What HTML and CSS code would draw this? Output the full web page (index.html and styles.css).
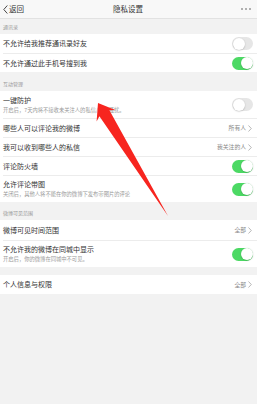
FILE: index.html
```html
<!DOCTYPE html>
<html lang="zh-CN">
<head>
<meta charset="utf-8">
<link rel="stylesheet" href="styles.css">
</head>
<body>
<div class="page">
  <header class="nav">
    <div class="back">
      <svg class="back-icon" width="5" height="9" viewBox="0 0 5 9"><path d="M4.3 0.5 L0.8 4.5 L4.3 8.5" fill="none" stroke="#333" stroke-width="0.9"/></svg>
      <span>返回</span>
    </div>
    <div class="title">隐私设置</div>
    <svg class="more" width="12" height="4" viewBox="0 0 12 4"><circle cx="2" cy="2" r="0.8" fill="#555"/><circle cx="6" cy="2" r="0.8" fill="#555"/><circle cx="10" cy="2" r="0.8" fill="#555"/></svg>
  </header>

  <div class="sec-head h15">通讯录</div>
  <div class="group">
    <div class="row"><div class="cell h19"><span class="label">不允许给我推荐通讯录好友</span><span class="switch"></span></div></div>
    <div class="row"><div class="cell h18"><span class="label">不允许通过此手机号搜到我</span><span class="switch on"></span></div></div>
  </div>

  <div class="sec-head h19">互动管理</div>
  <div class="group">
    <div class="row"><div class="cell h27"><div class="texts"><span class="label">一键防护</span><span class="sub">开启后，7天内将不接收未关注人的私信/评论骚扰。</span></div><span class="switch"></span></div></div>
    <div class="row"><div class="cell h18"><span class="label">哪些人可以评论我的微博</span><span class="value">所有人<svg class="chev" width="4" height="7" viewBox="0 0 4 7"><path d="M0.5 0.5 L3.3 3.5 L0.5 6.5" fill="none" stroke="#999" stroke-width="0.7"/></svg></span></div></div>
    <div class="row"><div class="cell h18"><span class="label">我可以收到哪些人的私信</span><span class="value">我关注的人<svg class="chev" width="4" height="7" viewBox="0 0 4 7"><path d="M0.5 0.5 L3.3 3.5 L0.5 6.5" fill="none" stroke="#999" stroke-width="0.7"/></svg></span></div></div>
    <div class="row"><div class="cell h18"><span class="label">评论防火墙</span><span class="switch on"></span></div></div>
    <div class="row"><div class="cell h26"><div class="texts"><span class="label">允许评论带图</span><span class="sub">关闭后，其他人将不能在你的微博下发布带图片的评论</span></div><span class="switch on"></span></div></div>
  </div>

  <div class="sec-head h18">微博可见范围</div>
  <div class="group">
    <div class="row"><div class="cell h20"><span class="label">微博可见时间范围</span><span class="value">全部<svg class="chev" width="4" height="7" viewBox="0 0 4 7"><path d="M0.5 0.5 L3.3 3.5 L0.5 6.5" fill="none" stroke="#999" stroke-width="0.7"/></svg></span></div></div>
    <div class="row"><div class="cell h26"><div class="texts"><span class="label">不允许我的微博在同城中显示</span><span class="sub">开启后，你的微博在同城中不可见。</span></div><span class="switch on"></span></div></div>
  </div>

  <div class="gap"></div>
  <div class="group">
    <div class="row"><div class="cell h19"><span class="label">个人信息与权限</span><span class="value">全部<svg class="chev" width="4" height="7" viewBox="0 0 4 7"><path d="M0.5 0.5 L3.3 3.5 L0.5 6.5" fill="none" stroke="#999" stroke-width="0.7"/></svg></span></div></div>
  </div>

  <svg class="arrow" width="257" height="404" viewBox="0 0 257 404">
    <polygon points="98,103 115.3,110 109.4,110.2 168,216 99.4,116.3 96.6,121.5" fill="#f7251f"/>
  </svg>
</div>
</body>
</html>
```

FILE: styles.css
```css
* { box-sizing: border-box; margin: 0; padding: 0; }
html, body { width: 257px; height: 404px; overflow: hidden; }
body {
  background: #f2f2f2;
  font-family: "Noto Sans CJK SC", "Noto Sans", sans-serif;
  color: #333;
}
.page { position: relative; width: 257px; height: 404px; }

.nav {
  height: 19px;
  background: #f8f8f8;
  border-bottom: 1px solid #e2e2e2;
  display: grid;
  grid-template-columns: 1fr auto 1fr;
  align-items: center;
  padding: 0 4px 0 3px;
}
.back { display: flex; align-items: center; gap: 1px; font-size: 7.5px; line-height: 10px; color: #333; }
.back-icon { display: block; }
.title { font-size: 7.5px; line-height: 10px; color: #333; }
.more { justify-self: end; display: block; margin-right: 1px; }

.sec-head {
  display: flex;
  align-items: flex-end;
  padding: 0 0 4px 3px;
  font-size: 5px;
  line-height: 6px;
  color: #999;
}
.h15 { height: 15px; }
.h18 { height: 18px; }
.h19 { height: 19px; }
.h20 { height: 20px; }
.h26 { height: 26px; }
.h27 { height: 27px; }

.group { background: #fff; }
.row { padding-left: 3px; }
.row + .row .cell { border-top: 1px solid #ececec; box-sizing: content-box; }
.cell {
  display: flex;
  align-items: center;
  justify-content: space-between;
  padding-right: 4px;
}
.label { font-size: 7px; line-height: 9px; color: #333; white-space: nowrap; }
.texts { display: flex; flex-direction: column; gap: 2px; }
.sub { font-size: 5.3px; line-height: 7px; color: #999; white-space: nowrap; }
.value {
  display: flex;
  align-items: center;
  gap: 2px;
  font-size: 5.8px;
  line-height: 8px;
  color: #888;
  padding-right: 1px;
}
.chev { display: block; }

.switch {
  position: relative;
  flex: none;
  width: 21px;
  height: 13px;
  border-radius: 7px;
  background: #e6e6e6;
}
.switch::after {
  content: "";
  position: absolute;
  top: 0.5px;
  left: 0.5px;
  width: 12px;
  height: 12px;
  border-radius: 50%;
  background: #fff;
  box-shadow: 0 0.5px 1.5px rgba(0,0,0,0.25);
}
.switch.on { background: #4cd964; }
.switch.on::after { left: 8.5px; }

.gap { height: 8px; }

.arrow { position: absolute; left: 0; top: 0; pointer-events: none; }
```
